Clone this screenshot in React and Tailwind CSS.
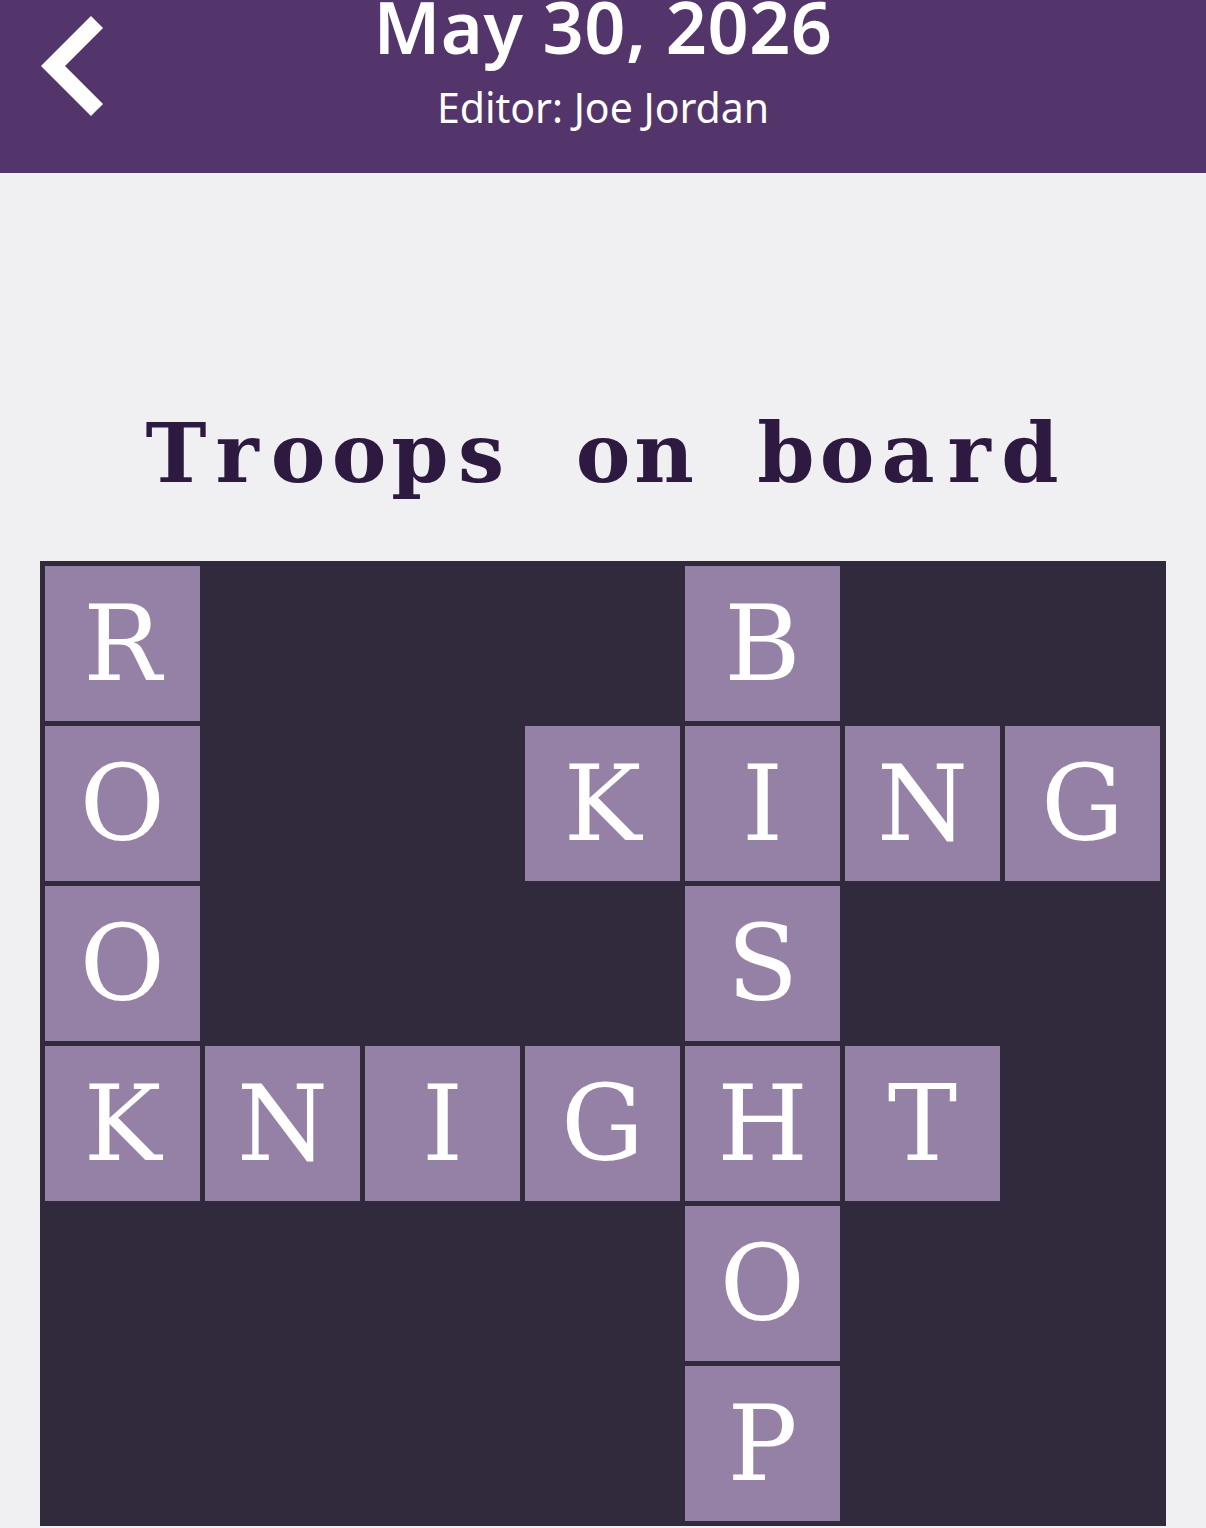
import React from "react";

const ROWS = [
  "R...B..",
  "O..KING",
  "O...S..",
  "KNIGHT.",
  "....O..",
  "....P..",
];

const SLAB = "'DejaVu Serif', serif";

function BackChevron() {
  return (
    <svg width="70" height="110" viewBox="0 0 70 110" className="block">
      <polyline
        points="58,8 14,52 58,96"
        fill="none"
        stroke="white"
        strokeWidth="17"
        strokeLinejoin="miter"
        strokeLinecap="butt"
      />
    </svg>
  );
}

// fixed-pitch title: each character sits in a 61px slot
function MonoTitle({ text }) {
  return (
    <h2
      className="mt-[230px] flex justify-center text-[82px] leading-[100px] font-bold text-[#2e1a40]"
      style={{ fontFamily: SLAB }}
      aria-label={text}
    >
      {text.split("").map((ch, i) => (
        <span key={i} className="inline-block w-[61px] text-center">
          {ch === " " ? "\u00a0" : ch}
        </span>
      ))}
    </h2>
  );
}

export default function App() {
  return (
    <div className="min-h-screen bg-[#f0f0f2] overflow-hidden">
      <header className="relative h-[173px] bg-[#54356b] text-white" style={{ fontFamily: "'Noto Sans', sans-serif" }}>
        <button className="absolute left-[39px] top-[14px]">
          <BackChevron />
        </button>
        <div className="flex flex-col items-center">
          <h1 className="text-[72px] font-semibold leading-none -mt-[10px] tracking-[0.5px]">
            May 30, 2026
          </h1>
          <p className="text-[41px] leading-none mt-[25px]">Editor: Joe Jordan</p>
        </div>
      </header>

      <MonoTitle text="Troops on board" />

      <div className="mt-[58px] ml-[40px] w-[1126px] bg-[#312a3d] p-[5px] grid grid-cols-[repeat(7,155px)] gap-[5px]">
        {ROWS.flatMap((row, r) =>
          row.split("").map((ch, c) =>
            ch === "." ? (
              <div key={`${r}-${c}`} className="h-[155px]" />
            ) : (
              <div
                key={`${r}-${c}`}
                className="h-[155px] bg-[#9581a5] flex items-center justify-center text-white text-[104px] font-medium leading-none"
                style={{ fontFamily: SLAB }}
              >
                {ch}
              </div>
            )
          )
        )}
      </div>
    </div>
  );
}
